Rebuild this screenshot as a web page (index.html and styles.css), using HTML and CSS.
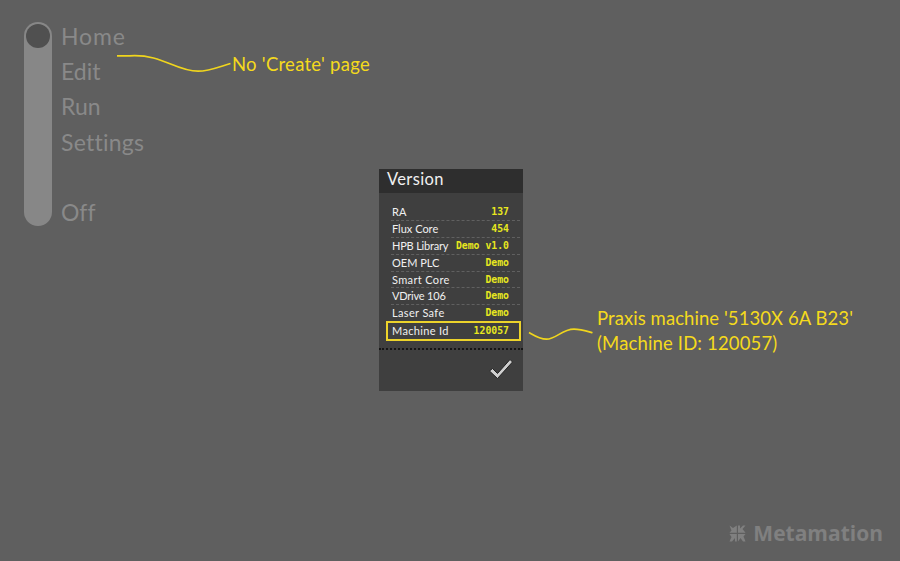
FILE: index.html
```html
<!DOCTYPE html>
<html lang="en">
<head>
<meta charset="utf-8">
<title>Metamation</title>
<link rel="stylesheet" href="styles.css">
</head>
<body>
<main class="screen">
  <nav class="menu">
    <div class="track"><span class="knob"></span></div>
    <ul class="items">
      <li class="home">Home</li>
      <li class="edit">Edit</li>
      <li class="run">Run</li>
      <li class="settings">Settings</li>
      <li class="off">Off</li>
    </ul>
  </nav>

  <section class="dialog">
    <h1 class="title"><span>Version</span></h1>
    <dl class="rows">
      <div class="row"><dt>RA</dt><dd>137</dd></div>
      <div class="row"><dt>Flux Core</dt><dd>454</dd></div>
      <div class="row"><dt class="tight">HPB Library</dt><dd>Demo v1.0</dd></div>
      <div class="row"><dt>OEM PLC</dt><dd>Demo</dd></div>
      <div class="row"><dt class="wide">Smart Core</dt><dd>Demo</dd></div>
      <div class="row"><dt class="tight">VDrive 106</dt><dd>Demo</dd></div>
      <div class="row"><dt class="wide">Laser Safe</dt><dd>Demo</dd></div>
      <div class="row marked"><dt class="wide">Machine Id</dt><dd>120057</dd></div>
    </dl>
    <footer class="actions">
      <svg class="check" width="26" height="22" viewBox="0 0 26 22">
        <path d="M1.500 13 4.500 10.500 9.500 15.500 22 1.500 24.500 4 9.500 20.500Z" fill="#cfcfcf" stroke="#222" stroke-width="1"/>
      </svg>
    </footer>
  </section>

  <footer class="brand">
    <svg class="mark" width="17" height="17" viewBox="0 0 17 17" fill="currentColor">
      <path d="M0.500 0.500 4 3 7.800 0.500V7.800H0.500L2.500 5.500Z"/>
      <path d="M9 0.500H11V3.500L14 0.500H16.500L13.500 4 16.500 7.800H9Z"/>
      <path d="M0.500 9H7.800V16.500H6V13L3 16.500H0.500L2.500 12Z"/>
      <path d="M9 9H16.500L14.500 11.500 16.500 16.500H14L11.500 13 9 16.500Z"/>
    </svg>
    <span>Metamation</span>
  </footer>

  <svg class="leaders" width="900" height="561" viewBox="0 0 900 561">
    <path d="M117 55.800H130C163 54 175 71.200 198 71.200C209 71.200 220 66.500 230.500 63.500"/>
    <path d="M529 332.500C535 336 540 339.200 546.500 339.200C556 339.200 562 329.200 574 329.200C580 329.200 586 331 592.500 332.800"/>
  </svg>
  <p class="note note-page">No 'Create' page</p>
  <p class="note note-machine"><span>Praxis machine '5130X 6A B23'</span><br><span class="id">(Machine ID: 120057)</span></p>
</main>
</body>
</html>
```
FILE: styles.css
```css
* { box-sizing: border-box; margin: 0; padding: 0; }
body { background: #5f5f5f; font-family: Lato, sans-serif; }
.screen {
  position: relative;
  width: 900px;
  height: 561px;
  overflow: hidden;
  display: grid;
  grid-template-columns: 379px 144px 1fr;
  grid-template-rows: 1fr auto;
}
.menu { display: flex; gap: 9px; padding: 22px 0 0 24px; grid-row: 1; align-items: flex-start; }
.track { width: 28px; height: 204px; border-radius: 14px; background: #878787; padding: 2px; }
.knob { display: block; width: 24px; height: 24px; border-radius: 50%; background: #505050; }
.items { list-style: none; color: #898989; font-size: 23px; font-variant-ligatures: none; }
.items li { height: 35.2px; line-height: 28px; white-space: nowrap; }
.home { letter-spacing: .9px; }
.settings { letter-spacing: .25px; }
.items .off { margin-top: 35.3px; }

.dialog { grid-column: 2; margin-top: 169px; height: 222px; background: #3f3f3f; display: flex; flex-direction: column; align-self: start; }
.title { height: 24px; background: #2e2e2e; color: #f0f0f0; font-size: 16.500px; line-height: 20px; font-weight: 400; padding-left: 8px; letter-spacing: .35px; }
.rows { padding: 11px 3px 0 12px; height: 155px; }
.row { height: 16.9px; display: flex; justify-content: space-between; line-height: 15px; padding: 0 11px 0 1px; border-bottom: 1px dashed #606060; white-space: nowrap; }
.row dt { color: #f0f0f0; font-size: 11px; }
.row .tight { letter-spacing: -.2px; }
.row .wide { letter-spacing: .35px; }
.row dd { color: #e8e81e; font: bold 9.8px/16px "DejaVu Sans Mono", monospace; }
.marked { height: 20px; margin: -1px -1px 0 -5px; border: 2px solid #ecd32b; padding: 0 10px 0 4px; }
.actions { flex: 1; border-top: 2px dotted #151515; display: flex; justify-content: flex-end; padding: 8px 9px 0 0; }

.brand { grid-column: 3; grid-row: 2; justify-self: end; display: flex; align-items: center; gap: 7px; padding: 0 17px 14px 0; color: #808080; font: bold 21px/28px "Open Sans", sans-serif; }

.leaders { position: absolute; inset: 0; fill: none; stroke: #f0d51d; stroke-width: 1.7; }
.note { position: absolute; color: #f5da1c; font-size: 18.500px; line-height: 25px; white-space: nowrap; letter-spacing: .07px; }
.note-page { left: 232px; top: 52px; letter-spacing: .27px; }
.note-machine { left: 597px; top: 306px; }
.id { letter-spacing: .15px; }
```
